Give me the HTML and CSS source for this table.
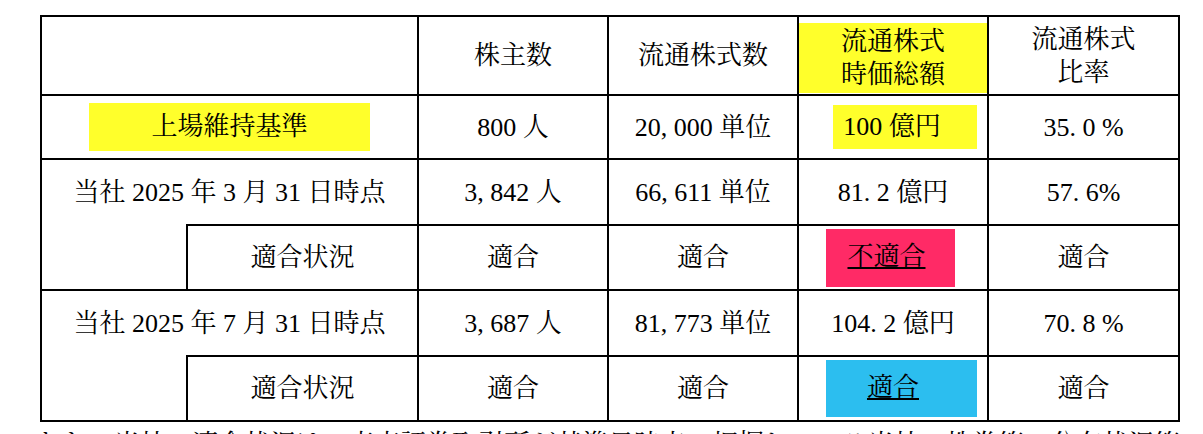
FILE: index.html
```html
<!DOCTYPE html>
<html lang="ja">
<head>
<meta charset="utf-8">
<title>上場維持基準への適合状況</title>
<link rel="stylesheet" href="styles.css">
</head>
<body>
<main class="page">
  <table class="grid">
    <colgroup>
      <col class="c-a"><col class="c-b"><col class="c-n"><col class="c-n"><col class="c-n"><col class="c-last">
    </colgroup>
    <tr class="r-head">
      <td colspan="2"></td>
      <td>株主数</td>
      <td>流通株式数</td>
      <td class="cell-fill"><div class="head-mark">流通株式<br>時価総額</div></td>
      <td>流通株式<br>比率</td>
    </tr>
    <tr class="r-std">
      <td colspan="2"><span class="mark mark-label">上場維持基準</span></td>
      <td>800 人</td>
      <td>20<span class="pn">,</span>000 単位</td>
      <td class="cell-left"><div class="mark mark-value">100 億円</div></td>
      <td>35<span class="pn">.</span>0 %</td>
    </tr>
    <tr class="r-data">
      <td colspan="2" class="date-cell">当社 2025 年 3 月 31 日時点</td>
      <td>3<span class="pn">,</span>842 人</td>
      <td>66<span class="pn">,</span>611 単位</td>
      <td>81<span class="pn">.</span>2 億円</td>
      <td>57<span class="pn">.</span>6%</td>
    </tr>
    <tr class="r-fit">
      <td class="gap-cell"></td>
      <td>適合状況</td>
      <td>適合</td>
      <td>適合</td>
      <td class="cell-left"><div class="mark mark-ng"><u>不適合</u></div></td>
      <td>適合</td>
    </tr>
    <tr class="r-data">
      <td colspan="2" class="date-cell">当社 2025 年 7 月 31 日時点</td>
      <td>3<span class="pn">,</span>687 人</td>
      <td>81<span class="pn">,</span>773 単位</td>
      <td>104<span class="pn">.</span>2 億円</td>
      <td>70<span class="pn">.</span>8 %</td>
    </tr>
    <tr class="r-fit">
      <td class="gap-cell"></td>
      <td>適合状況</td>
      <td>適合</td>
      <td>適合</td>
      <td class="cell-left"><div class="mark mark-ok"><u>適合</u></div></td>
      <td>適合</td>
    </tr>
  </table>
  <p class="note">なお、当社の適合状況は、東京証券取引所が基準日時点で把握している当社の株券等の分布状況等をもとに算出を行ったものです。</p>
</main>
</body>
</html>
```

FILE: styles.css
```css
html, body {
  margin: 0;
  height: 100%;
  overflow: hidden;
  background: #ffffff;
}

body {
  font-family: "Liberation Serif", "Noto Serif CJK JP", "Noto Sans CJK JP", serif;
  font-size: 26px;
  color: #000000;
}

.page {
  padding: 15px 0 0 40px;
}

.grid {
  border-collapse: collapse;
  table-layout: fixed;
  width: 1140px;
}

.grid td {
  border: 2px solid #000000;
  padding: 0;
  text-align: center;
  vertical-align: middle;
  line-height: 33px;
  white-space: nowrap;
}

.c-a { width: 146px; }
.c-b { width: 231px; }
.c-n { width: 190px; }
.c-last { width: 191px; }

.r-head { height: 79px; }
.r-std { height: 64px; }
.r-data { height: 66px; }
.r-fit { height: 65px; }

.grid td.date-cell { border-bottom-style: none; }
.grid td.gap-cell { border-top-style: none; }

.pn {
  display: inline-block;
  width: 0.5em;
  text-align: left;
}

.grid td.cell-fill {
  vertical-align: bottom;
  padding-bottom: 1px;
}

.head-mark {
  height: 70px;
  display: flex;
  flex-direction: column;
  justify-content: center;
  background: #ffff2b;
}

.grid td.cell-left { text-align: left; }

.mark {
  box-sizing: border-box;
  text-align: center;
}

.mark-label {
  display: inline-block;
  width: 281px;
  height: 48px;
  line-height: 48px;
  background: #ffff2b;
}

.mark-value {
  margin-left: 34px;
  width: 144px;
  height: 44px;
  line-height: 44px;
  padding-right: 26px;
  background: #ffff2b;
}

.mark-ng {
  margin-left: 27px;
  width: 129px;
  height: 58px;
  line-height: 56px;
  padding-right: 8px;
  background: #ff2a66;
}

.mark-ok {
  margin-left: 27px;
  width: 151px;
  height: 57px;
  line-height: 55px;
  padding-right: 17px;
  background: #2cbeef;
}

.mark u {
  text-decoration-thickness: 2px;
  text-underline-offset: 2px;
}

.note {
  width: 1146px;
  margin: 5px 0 0 -4px;
  line-height: 30px;
  font-family: "Noto Serif CJK JP", "Noto Sans CJK JP", serif;
}
```
